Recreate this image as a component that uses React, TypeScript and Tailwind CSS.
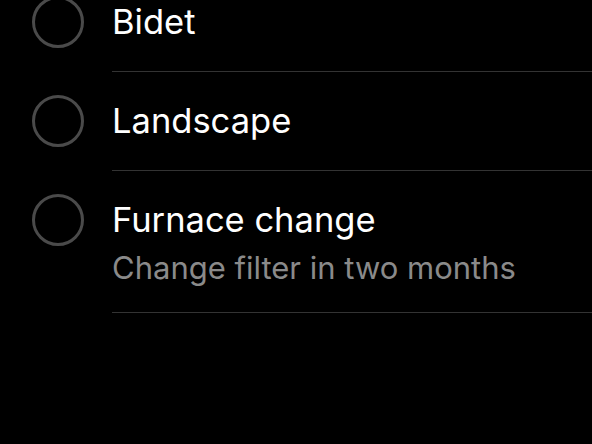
const items = [
  { title: "Bidet" },
  { title: "Landscape" },
  { title: "Furnace change", note: "Change filter in two months" },
];

export default function App() {
  return (
    <div
      className="min-h-screen overflow-hidden bg-black text-white"
      style={{ fontFamily: "Inter, 'Noto Sans', sans-serif" }}
    >
      <div className="-mt-[27px]">
        {items.map((it) => (
          <div key={it.title} className="flex pl-[32px]">
            <div className="mt-[28px] flex h-[42px] w-[80px] shrink-0 items-center">
              <div className="h-[52px] w-[52px] rounded-full border-[3px] border-[#4a4a4a]" />
            </div>
            <div
              className={`flex-1 border-b border-[#333333] pt-[28px] ${it.note ? "pb-[27px]" : "pb-[28px]"}`}
            >
              <div className="text-[34.5px] leading-[42px]">{it.title}</div>
              {it.note && (
                <div className="mt-[10px] text-[31px] leading-[34px] text-[#8a8a8a]">
                  {it.note}
                </div>
              )}
            </div>
          </div>
        ))}
      </div>
    </div>
  );
}
